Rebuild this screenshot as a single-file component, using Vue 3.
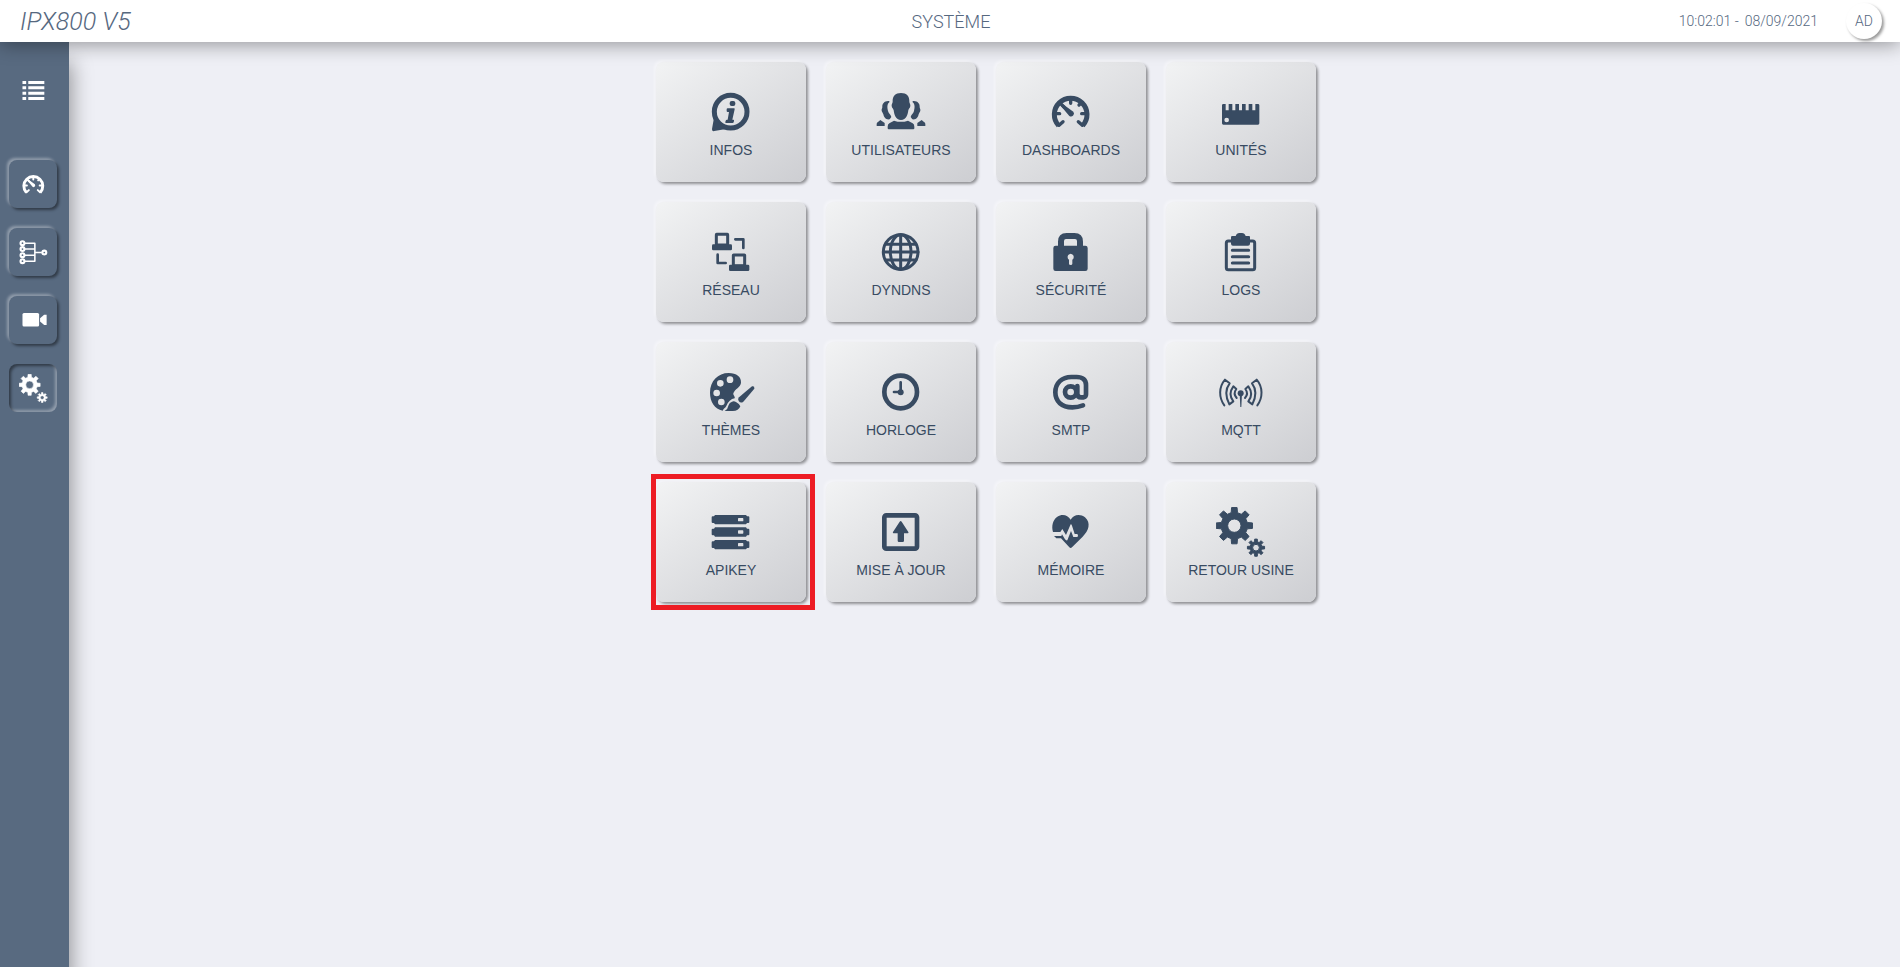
<template>
  <div class="app">
    <header class="topbar">
      <span class="topbar__brand">IPX800 V5</span>
      <h1 class="topbar__title">SYSTÈME</h1>
      <div class="topbar__right">
        <div class="topbar__clock">
          <span>{{ time }} -</span>
          <span>{{ date }}</span>
        </div>
        <button type="button" class="avatar">AD</button>
      </div>
    </header>

    <div class="layout">
      <nav class="sidebar">
        <button type="button" class="sidebar__toggle" aria-label="Menu">
          <svg class="sidebar__icon" viewBox="0 0 150 150" v-html="icons.menu"></svg>
        </button>
        <button
          v-for="item in navItems"
          :key="item.icon"
          type="button"
          class="sidebar__btn"
          :class="{ 'sidebar__btn--active': item.icon === current }"
          :aria-label="item.label"
          @click="current = item.icon"
        >
          <svg class="sidebar__icon" viewBox="0 0 150 150" v-html="icons[item.icon]"></svg>
        </button>
      </nav>

      <main class="content">
        <div class="tiles">
          <button
            v-for="tile in tiles"
            :key="tile.icon"
            type="button"
            class="tile"
            :class="{ 'tile--marked': tile.marked }"
          >
            <svg class="tile__icon" viewBox="0 0 150 150" v-html="icons[tile.icon]"></svg>
            <span class="tile__label">{{ tile.label }}</span>
          </button>
        </div>
      </main>
    </div>
  </div>
</template>

<script setup>
import { ref } from 'vue'

const time = ref('10:02:01')
const date = ref('08/09/2021')
const current = ref('gears')

const navItems = [
  { icon: 'dashboard', label: 'Dashboards' },
  { icon: 'io', label: 'Entrées / sorties' },
  { icon: 'camera', label: 'Caméras' },
  { icon: 'gears', label: 'Système' },
]

const tiles = [
  { icon: 'info', label: 'INFOS' },
  { icon: 'users', label: 'UTILISATEURS' },
  { icon: 'dashboard', label: 'DASHBOARDS' },
  { icon: 'ruler', label: 'UNITÉS' },
  { icon: 'network', label: 'RÉSEAU' },
  { icon: 'globe', label: 'DYNDNS' },
  { icon: 'lock', label: 'SÉCURITÉ' },
  { icon: 'clipboard', label: 'LOGS' },
  { icon: 'palette', label: 'THÈMES' },
  { icon: 'clock', label: 'HORLOGE' },
  { icon: 'at', label: 'SMTP' },
  { icon: 'antenna', label: 'MQTT' },
  { icon: 'servers', label: 'APIKEY', marked: true },
  { icon: 'update', label: 'MISE À JOUR' },
  { icon: 'heart', label: 'MÉMOIRE' },
  { icon: 'gears', label: 'RETOUR USINE' },
]

// eight-tooth gear with a round hole, filled with evenodd
function gear(cx, cy, outer, inner, hole) {
  const pts = []
  for (let i = 0; i < 8; i++) {
    const a = (i * Math.PI) / 4
    const steps = [[inner, -0.24], [outer, -0.15], [outer, 0.15], [inner, 0.24]]
    for (const [r, d] of steps) {
      pts.push((cx + r * Math.cos(a + d)).toFixed(1) + ' ' + (cy + r * Math.sin(a + d)).toFixed(1))
    }
  }
  const ring = `M${cx - hole} ${cy}a${hole} ${hole} 0 1 0 ${hole * 2} 0a${hole} ${hole} 0 1 0 ${-hole * 2} 0Z`
  return `<path fill-rule="evenodd" stroke="currentColor" stroke-width="3" stroke-linejoin="round" d="M${pts.join('L')}Z${ring}"/>`
}

const line = 'fill="none" stroke="currentColor" stroke-linecap="round" stroke-linejoin="round"'

const bar = (y) =>
  `<path fill-rule="evenodd" d="M27 ${y}H120L123 ${y + 4}H127Q130 ${y + 4} 130 ${y + 7}V${y + 21}Q130 ${y + 24} 127 ${y + 24}H123L120 ${y + 28}H27L24 ${y + 24}H20Q17 ${y + 24} 17 ${y + 21}V${y + 7}Q17 ${y + 4} 20 ${y + 4}H24ZM98 ${y + 9}Q96 ${y + 9} 96 ${y + 11}V${y + 17}Q96 ${y + 19} 98 ${y + 19}H110Q112 ${y + 19} 112 ${y + 17}V${y + 11}Q112 ${y + 9} 110 ${y + 9}Z"/>`

const waves =
  'M25 115C8 92 8 60 27 38L41 49C28 66 28 88 40 112L52 103C40 88 42 72 52 58L61 66C54 75 55 85 62 93'

const icons = {
  menu: `<g ${line.replace('round', 'butt')} stroke-width="16"><path d="M18 34H37M18 61H37M18 89H37M18 116H37M48 34H131M48 61H131M48 89H131M48 116H131"/></g>`,
  info: `<circle cx="74" cy="74" r="49" ${line} stroke-width="15"/><path d="M24 92L18 126Q17 134 25 132L60 126L40 108Z"/><rect x="71" y="42" width="17" height="15" rx="6"/><path d="M65 64H84Q87 64 86 67L79 98H82Q85 98 84 102L83 106Q82 108 80 108H60Q57 108 58 105L59 101Q60 98 63 98H65L69 75H65Q62 75 62 72V67Q62 64 65 64Z"/>`,
  users: `<path d="M75 18C92 18 101 27 100 44C100 49 104 50 103 57C102 64 98 64 97 70C95 84 91 99 75 99C59 99 55 84 53 70C52 64 48 64 47 57C46 50 50 49 50 44C49 27 58 18 75 18Z"/><path d="M54 101Q75 108 96 101L110 109Q115 112 115 119V124Q115 127 112 127H38Q35 127 35 124V119Q35 112 40 109Z"/><path d="M40 42C26 40 18 50 19 60C19 64 16 66 17 71C18 76 21 77 22 82C24 91 29 99 41 97L46 90C44 82 38 80 36 72C34 64 32 52 40 46Z"/><path d="M110 42C124 40 132 50 131 60C131 64 134 66 133 71C132 76 129 77 128 82C126 91 121 99 109 97L104 90C106 82 112 80 114 72C116 64 118 52 110 46Z"/><path d="M13 99L26 108V117H2V111Q2 107 6 105ZM137 99L124 108V117H148V111Q148 107 144 105Z"/>`,
  dashboard: `<g ${line}><path stroke-width="15" stroke-linecap="butt" d="M38 116A49 49 0 1 1 110 116"/><path stroke-width="10" d="M39 115L51 104M109 115L97 104M31 80H41M117 80H107M74 37V49M99 54L105 48M43 49L54 60"/></g><path d="M50 51L82 74A9 9 0 0 1 70 87L44 56Z"/>`,
  ruler: `<path fill-rule="evenodd" d="M22 51H29V70H38V51H49V70H58V51H69V70H78V51H89V70H98V51H109V70H118V51H126Q130 51 130 55V109Q130 113 126 113H22Q18 113 18 109V55Q18 51 22 51ZM25 99a7 7 0 1 0 14 0a7 7 0 1 0-14 0Z"/>`,
  network: `<g ${line} stroke-width="9"><rect x="31" y="22" width="34" height="32" rx="1"/><rect x="82" y="84" width="34" height="32" rx="1"/><path stroke-width="8" d="M88 37H112V63M35 83V108H59"/></g><rect x="18" y="52" width="60" height="18" rx="4"/><rect x="69" y="113" width="61" height="19" rx="4"/>`,
  globe: `<g ${line} stroke-width="9"><circle cx="74" cy="75" r="52"/><ellipse cx="74" cy="75" rx="31" ry="52"/><path d="M74 23V127M22 75H126M28 52H120M28 99H120"/></g>`,
  lock: `<path fill-rule="evenodd" d="M36 56V44Q36 18 62 18H85Q111 18 111 44V56H118Q125 56 125 63V125Q125 132 118 132H29Q22 132 22 125V63Q22 56 29 56ZM54 56H93V42Q93 36 87 36H60Q54 36 54 42ZM74 80A10 10 0 0 0 69 98V110Q69 114 74 114Q79 114 79 110V98A10 10 0 0 0 74 80Z"/>`,
  clipboard: `<rect x="31" y="42" width="85" height="86" rx="6" ${line} stroke-width="9"/><path d="M49 27H59Q62 18 70 18H78Q86 18 89 27H99Q102 27 102 30V50Q102 56 96 56H51Q45 56 45 50V30Q45 27 49 27Z"/><path ${line} stroke-width="9" stroke-linecap="butt" d="M49 70H98M49 89H98M49 108H98"/>`,
  palette: `<path fill-rule="evenodd" d="M68 18C92 18 106 30 105 47C104 61 86 66 82 79C81 86 88 88 86 94C75 96 66 104 61 117C57 124 53 124 50 131C26 126 12 104 12 77C12 42 36 18 68 18ZM62 38a10 10 0 1 0 20 0a10 10 0 1 0-20 0ZM33 49a10 10 0 1 0 20 0a10 10 0 1 0-20 0ZM22 78a10 10 0 1 0 20 0a10 10 0 1 0-20 0ZM36 105a10 10 0 1 0 20 0a10 10 0 1 0-20 0Z"/><path d="M138 58Q146 56 145 65L112 104Q104 110 98 102Q94 96 99 91Z"/><path d="M78 104Q84 101 91 106Q100 111 103 118Q98 132 80 132H56Q66 126 68 114Q70 107 78 104Z"/>`,
  clock: `<circle cx="74" cy="75" r="49" ${line} stroke-width="14"/><path ${line} stroke-width="8" d="M74 46V75H54"/><circle cx="74" cy="76" r="9"/>`,
  at: `<g ${line} stroke-width="14"><path d="M111 115C98 120 89 121 79 121C47 121 28 103 28 76C28 48 48 30 76 30H92C110 30 120 39 120 54V82Q120 90 112 91H106Q94 91 94 80V57"/><circle cx="74" cy="75" r="17"/></g>`,
  antenna: `<g ${line} stroke-width="6"><path d="${waves}"/><path transform="matrix(-1 0 0 1 149 0)" d="${waves}"/></g><circle cx="74" cy="79" r="9"/><path d="M71 79H78L76 120H73Z"/>`,
  servers: bar(24) + bar(61) + bar(99),
  update: `<rect x="25" y="25" width="98" height="100" rx="6" ${line} stroke-width="14"/><path d="M71 44Q74 40 77 44L97 75Q99 79 95 79H84V101Q84 105 80 105H69Q65 105 65 101V79H53Q49 79 51 75Z"/>`,
  heart: `<path d="M74 38C65 22 47 20 34 29C20 39 16 57 21 75H43L49 66L60 84L74 52Q77 52 78 56L86 81H93Q96 82 96 86Q96 90 92 90H82L75 72L64 100Q60 101 57 97L48 82L46 87H24L31 94H27L45 94L70 121Q74 125 78 121L110 89C128 72 136 48 117 31C103 19 82 22 74 38Z"/>`,
  gears: gear(55, 56, 55, 40, 20) + gear(120, 122, 26, 18, 10),
  io: `<g ${line}><path stroke-width="8" stroke-linecap="butt" d="M30 27H82V120H30M30 57H82M30 89H82M82 75H118"/><g stroke-width="11"><circle cx="18" cy="27" r="10"/><circle cx="18" cy="57" r="10"/><circle cx="18" cy="89" r="10"/><circle cx="18" cy="120" r="10"/><circle cx="131" cy="75" r="10"/></g></g>`,
  camera: `<rect x="18" y="36" width="86" height="70" rx="8"/><path d="M109 64L130 45H143V98H130L109 80Z"/>`,
}
</script>

<style>
body {
  background: #eeeff5;
}
</style>

<style scoped>
.app {
  display: flex;
  flex-direction: column;
  min-height: 100vh;
  font-family: Roboto, sans-serif;
  font-weight: 300;
  color: #56687f;
}
button {
  border: none;
  padding: 0;
  font: inherit;
  color: inherit;
  cursor: pointer;
}
svg {
  display: block;
  fill: currentColor;
}

.topbar {
  display: grid;
  grid-template-columns: 1fr auto 1fr;
  align-items: center;
  height: 42px;
  padding: 0 18px 0 20px;
  background: #fff;
  box-shadow: 0 2px 20px rgba(0, 0, 0, 0.4);
  position: relative;
  z-index: 2;
}
.topbar__brand {
  font-size: 25px;
  font-style: italic;
}
.topbar__title {
  margin: 0;
  font-size: 18px;
  font-weight: 300;
}
.topbar__right {
  display: flex;
  justify-content: flex-end;
  align-items: center;
  gap: 28px;
}
.topbar__clock {
  display: flex;
  gap: 6px;
  font-size: 14px;
}
.avatar {
  width: 36px;
  height: 36px;
  border-radius: 50%;
  background: #fff;
  font-size: 14px;
  box-shadow: 2px 2px 3px rgba(0, 0, 0, 0.4);
}

.layout {
  display: flex;
  flex: 1;
  /* keeps the sidebar shadow even down to the bottom edge */
  overflow: hidden;
}
.sidebar {
  display: flex;
  flex-direction: column;
  gap: 20px;
  width: 69px;
  box-sizing: border-box;
  padding: 24px 12px 24px 9px;
  background: #586a80;
  box-shadow: 2px 20px 20px rgba(0, 0, 0, 0.4);
  color: #fff;
}
.sidebar__toggle,
.sidebar__btn {
  display: flex;
  align-items: center;
  justify-content: center;
  width: 48px;
  height: 48px;
  background: transparent;
}
.sidebar__toggle {
  margin-bottom: 26px;
}
.sidebar__btn {
  border-radius: 8px;
  background: #586a80;
  box-shadow: 2px 2px 3px rgba(0, 0, 0, 0.45), -2px -2px 3px rgba(255, 255, 255, 0.35);
}
.sidebar__btn--active {
  box-shadow: inset 2px 2px 3px rgba(0, 0, 0, 0.45), inset -2px -2px 3px rgba(255, 255, 255, 0.35);
}
.sidebar__icon {
  width: 29px;
  height: 29px;
}

.content {
  flex: 1;
  padding: 20px 0 20px 3px;
}
.tiles {
  display: grid;
  grid-template-columns: repeat(4, 150px);
  gap: 20px;
  justify-content: center;
}
.tile {
  display: flex;
  flex-direction: column;
  align-items: center;
  gap: 5px;
  height: 120px;
  padding-top: 25px;
  position: relative;
  border-radius: 8px;
  background: linear-gradient(145deg, #f2f3f4, #cdced2);
  box-shadow: 2px 2px 3px rgba(0, 0, 0, 0.4), -2px -2px 3px rgba(255, 255, 255, 0.4);
  color: #384b62;
}
.tile--marked::after {
  content: '';
  position: absolute;
  inset: -8px -9px -8px -5px;
  border: 5px solid #ed1c24;
}
.tile__icon {
  width: 50px;
  height: 50px;
}
.tile__label {
  font-family: 'Liberation Sans', Arial, sans-serif;
  font-size: 14px;
  font-weight: 400;
  line-height: 16px;
}
</style>
